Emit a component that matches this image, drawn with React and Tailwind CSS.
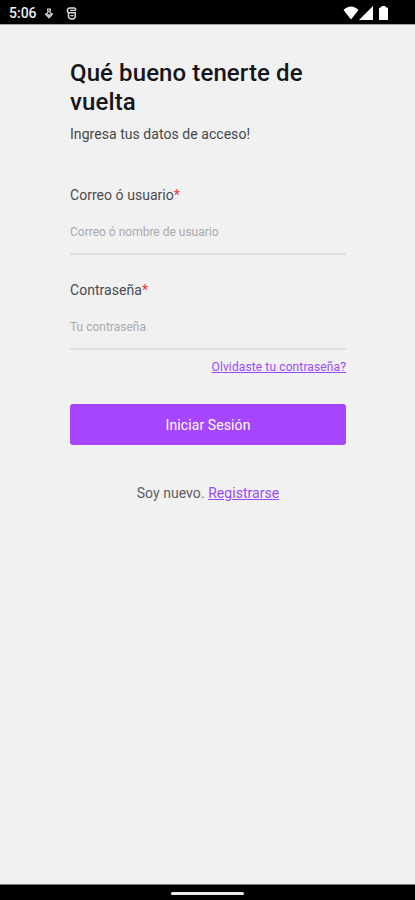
import React, { useState } from 'react';

const StatusBar = () => (
  <header className="flex h-6 shrink-0 items-center justify-between bg-black pl-[9px] pr-[27px] text-white">
    <div className="flex items-center">
      <span className="w-[35px] whitespace-nowrap pt-0.5 text-[14px] font-medium leading-4 text-[#ececec]">5:06</span>
      <svg className="mt-0.5 h-[11px] w-[10px]" viewBox="0 0 10 11" fill="none" stroke="#cfcfcf">
        <path d="M3.6 3.5V1.2h2.8v2.3" strokeWidth="1.2" />
        <path d="M1.2 5.5 5 9.6l3.8-4.1" strokeWidth="1.5" />
        <path d="M5 3.2 7.2 5.4 5 7.6 2.8 5.4z" strokeWidth="1.2" />
      </svg>
      <svg className="ml-[12px] mt-0.5 h-[13px] w-[11px]" viewBox="0 0 11 13" fill="none" stroke="#dcdcdc" strokeWidth="1.5">
        <path d="M9.7 3.2V2L8.5 1H3.2L1.5 2.4v2.4l1.2 1h6.5v4.4L7.5 12h-3l-2-1.8V5.8" />
        <path d="M4 3.3h5.7M4.4 8.7h3.2" strokeWidth="1.3" />
      </svg>
    </div>

    <div className="mt-0.5 flex items-center">
      <svg className="h-[14px] w-4" viewBox="0 0 16 14" fill="currentColor">
        <path d="M.5 4Q4 .5 8 .5T15.5 4L8 13.5z" />
      </svg>
      <svg className="h-[14px] w-[14px]" viewBox="0 0 14 14" fill="currentColor">
        <path d="M14 0v14H0z" />
      </svg>
      <svg className="ml-[6px] h-[14px] w-[9px]" viewBox="0 0 9 14" fill="currentColor">
        <path d="M2.5 0h4v1.2h1.2L9 2.5V14H0V2.5l1.3-1.3h1.2z" />
      </svg>
    </div>
  </header>
);

const Field = ({ label, type, placeholder, value, onChange }) => (
  <label className="block h-[95px]">
    <span className="block text-[14px] leading-5 tracking-[0.04px] text-[#4b4b4f]">
      {label}
      <span className="text-[#f0343c]">*</span>
    </span>
    <input
      type={type}
      value={value}
      onChange={(e) => onChange(e.target.value)}
      placeholder={placeholder}
      className="mt-[5px] block h-[45px] w-full border-b-2 border-[#dfdfe0] bg-transparent text-[12px] text-[#4b4b4f] outline-none placeholder:text-[#a9a9ab]"
    />
  </label>
);

export default function App() {
  const [user, setUser] = useState('');
  const [password, setPassword] = useState('');

  return (
    <div className="flex h-screen flex-col bg-[#f1f1f1] font-['Roboto',sans-serif]">
      <StatusBar />

      <main className="flex-1 border-t border-[#a5a5a5] pl-[70px] pr-[69px] pt-[34px]">
        <h1 className="text-[24px] font-medium leading-[29px] tracking-[0.1px] text-[#15161b]">
          Qué bueno tenerte de
          <br />
          vuelta
        </h1>
        <p className="mt-[7px] text-[14px] leading-5 tracking-[0.05px] text-[#46474b]">Ingresa tus datos de acceso!</p>

        <form className="mt-[41px]" onSubmit={(e) => e.preventDefault()}>
          <Field label="Correo ó usuario" type="text" placeholder="Correo ó nombre de usuario" value={user} onChange={setUser} />
          <Field label="Contraseña" type="password" placeholder="Tu contraseña" value={password} onChange={setPassword} />

          <div className="-mt-[16px] text-right text-[12px] leading-4 tracking-[0.12px]">
            <a href="#" className="text-[#9a4bf5] underline">Olvidaste tu contraseña?</a>
          </div>

          <button type="submit" className="mt-[29px] block h-[41px] w-full rounded-[3px] bg-[#a646ff] pt-px text-[14px] tracking-[0.1px] text-white">
            Iniciar Sesión
          </button>
        </form>

        <p className="mt-[38px] text-center text-[14px] leading-5 tracking-[0.05px] text-[#5d5d60]">
          Soy nuevo. <a href="#" className="text-[#9a4bf5] underline">Registrarse</a>
        </p>
      </main>

      {/* Gesture navigation bar */}
      <footer className="flex h-4 shrink-0 justify-center border-t border-[#777] bg-black pt-[7px]">
        <div className="h-[3px] w-[73px] rounded-full bg-[#e8e8e8]" />
      </footer>
    </div>
  );
}
